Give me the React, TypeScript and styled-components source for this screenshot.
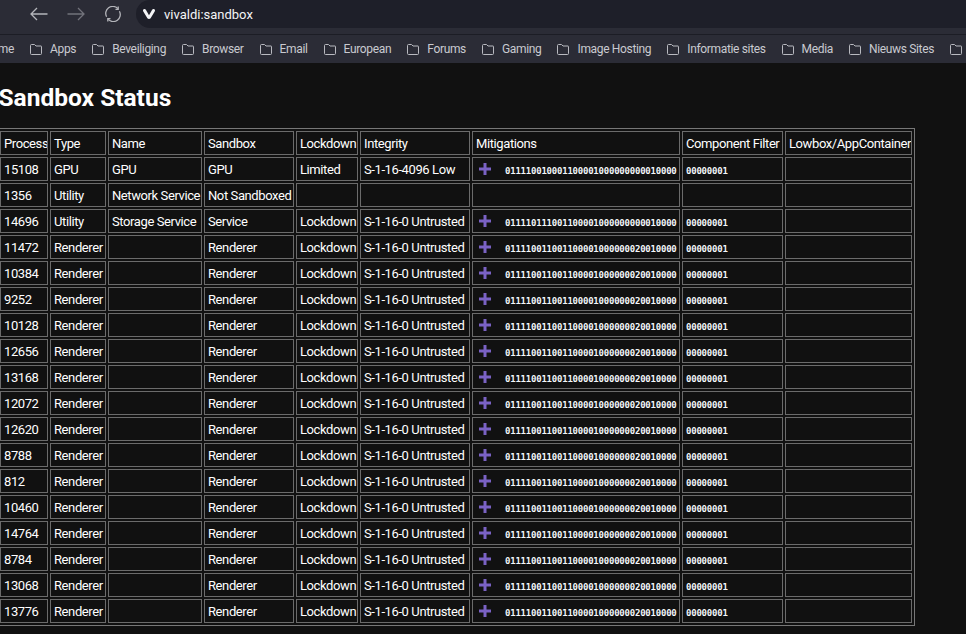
import { FunctionComponent } from 'react';
import styled, { createGlobalStyle } from 'styled-components';

const uiFont = `Roboto, "Open Sans", "Liberation Sans", sans-serif`;

const bookmarks = [
    'Apps', 'Beveiliging', 'Browser', 'Email', 'European', 'Forums', 'Gaming',
    'Image Hosting', 'Informatie sites', 'Media', 'Nieuws Sites', '',
];

const columns = [48, 56, 94, 90, 62, 110, 208, 101, 127];
const headers = ['Process', 'Type', 'Name', 'Sandbox', 'Lockdown', 'Integrity', 'Mitigations', 'Component Filter', 'Lowbox/AppContainer'];

interface IProcess {
    pid: string,
    type: string,
    name?: string,
    sandbox: string,
    lockdown?: string,
    integrity?: string,
    mitigations?: string,
    filter?: string,
}

const RENDERER_MASK = '011110011001100001000000020010000';

const renderer = (pid: string): IProcess => ({
    pid,
    type: 'Renderer',
    sandbox: 'Renderer',
    lockdown: 'Lockdown',
    integrity: 'S-1-16-0 Untrusted',
    mitigations: RENDERER_MASK,
    filter: '00000001',
});

const processes: IProcess[] = [
    { pid: '15108', type: 'GPU', name: 'GPU', sandbox: 'GPU', lockdown: 'Limited', integrity: 'S-1-16-4096 Low', mitigations: '011110010001100001000000000010000', filter: '00000001' },
    { pid: '1356', type: 'Utility', name: 'Network Service', sandbox: 'Not Sandboxed' },
    { pid: '14696', type: 'Utility', name: 'Storage Service', sandbox: 'Service', lockdown: 'Lockdown', integrity: 'S-1-16-0 Untrusted', mitigations: '011110111001100001000000000010000', filter: '00000001' },
    ...['11472', '10384', '9252', '10128', '12656', '13168', '12072', '12620', '8788', '812', '10460', '14764', '8784', '13068', '13776'].map(renderer),
];

const FolderIcon: FunctionComponent = () => (
    <FolderSvg viewBox="0 0 12 11" width="12" height="11">
        <path d="M.5 1.5a1 1 0 0 1 1-1h3l1.500 1.500h5a.5.5 0 0 1 .5.5v7a1 1 0 0 1-1 1h-9a1 1 0 0 1-1-1z" fill="none" stroke="currentColor" />
    </FolderSvg>
);

const PlusIcon: FunctionComponent = () => (
    <PlusSvg viewBox="0 0 12 12" width="12" height="12">
        <path d="M4.500 0h3v4.500H12v3H7.500V12h-3V7.500H0v-3h4.500z" fill="#7a62c4" />
    </PlusSvg>
);

export default function App() {
    return (
        <>
            <GlobalStyle />
            <Toolbar>
                <NavButton $dim={false}>
                    <svg viewBox="0 0 18 14" width="18" height="14" fill="none" stroke="currentColor" strokeWidth="1.300">
                        <path d="M17.500 7H1M7 1 1 7l6 6" />
                    </svg>
                </NavButton>
                <NavButton $dim>
                    <svg viewBox="0 0 18 14" width="18" height="14" fill="none" stroke="currentColor" strokeWidth="1.300">
                        <path d="M.5 7H17M11 1l6 6-6 6" />
                    </svg>
                </NavButton>
                <NavButton $dim={false}>
                    <svg viewBox="0 0 16 16" width="16" height="16" fill="none" stroke="currentColor" strokeWidth="1.300">
                        <path d="M12.800 2.600A7 7 0 0 0 1.600 10.800" />
                        <path d="M3.200 13.400A7 7 0 0 0 14.400 5.200" />
                        <path d="M13.200 .6v2.700h-2.700M2.800 15.400v-2.700h2.700" />
                    </svg>
                </NavButton>
                <AddressField>
                    <svg viewBox="0 0 12 10" width="12" height="10">
                        <path d="M0 1.500C0 .5.700 0 1.500 0c.7 0 1.100.3 1.500 1l3 5.200L9 1c.4-.7.800-1 1.500-1C11.300 0 12 .5 12 1.500c0 .4-.1.700-.3 1L7.600 9.200c-.4.600-.9.800-1.600.8s-1.200-.2-1.600-.8L.3 2.500c-.2-.3-.3-.6-.3-1z" fill="#f4f4f6" />
                    </svg>
                    <AddressText>vivaldi:sandbox</AddressText>
                </AddressField>
            </Toolbar>
            <BookmarkBar>
                <BookmarkCut>me</BookmarkCut>
                {bookmarks.map((label, i) => (
                    <Bookmark key={i}>
                        <FolderIcon />
                        {label && <span>{label}</span>}
                    </Bookmark>
                ))}
            </BookmarkBar>
            <Page>
                <Title>Sandbox Status</Title>
                <StatusTable>
                    <colgroup>
                        {columns.map((width, i) => <col key={i} style={{ width }} />)}
                    </colgroup>
                    <thead>
                        <tr>
                            {headers.map((header) => <HeadCell key={header}>{header}</HeadCell>)}
                        </tr>
                    </thead>
                    <tbody>
                        {processes.map((p) => (
                            <tr key={p.pid}>
                                <Cell>{p.pid}</Cell>
                                <Cell>{p.type}</Cell>
                                <Cell>{p.name}</Cell>
                                <Cell>{p.sandbox}</Cell>
                                <Cell>{p.lockdown}</Cell>
                                <Cell>{p.integrity}</Cell>
                                <Cell>
                                    {p.mitigations && (
                                        <MitigationWrap>
                                            <PlusIcon />
                                            <Mono>{p.mitigations}</Mono>
                                        </MitigationWrap>
                                    )}
                                </Cell>
                                <Cell>{p.filter && <Mono>{p.filter}</Mono>}</Cell>
                                <Cell />
                            </tr>
                        ))}
                    </tbody>
                </StatusTable>
            </Page>
        </>
    );
}

const GlobalStyle = createGlobalStyle`
    html, body {
        margin: 0;
        height: 100%;
        overflow: hidden;
        background: #111111;
    }
    body {
        font-family: ${uiFont};
        color: #ffffff;
    }
`;

const Toolbar = styled.div`
    height: 35px;
    box-sizing: border-box;
    background: #2b2c36;
    border-bottom: 1px solid #1c1d25;
    display: flex;
    align-items: flex-start;
    padding-left: 30px;
`;

const NavButton = styled.div<{ $dim: boolean }>`
    width: 18px;
    height: 28px;
    margin-right: 19px;
    display: flex;
    align-items: center;
    justify-content: center;
    color: ${(p) => (p.$dim ? '#72737b' : '#b4b5ba')};
`;

const AddressField = styled.div`
    flex: 1;
    height: 28px;
    margin-left: -5px;
    padding-left: 7px;
    display: flex;
    align-items: center;
    gap: 9px;
    background: #1e1f29;
    border-radius: 14px 0 0 14px;
`;

const AddressText = styled.span`
    font-size: 13px;
    color: #f4f4f6;
`;

const BookmarkBar = styled.div`
    height: 28px;
    box-sizing: border-box;
    background: #2b2c36;
    display: flex;
    align-items: center;
    gap: 16px;
    overflow: hidden;
    white-space: nowrap;
    font-size: 12px;
    letter-spacing: -0.34px;
    color: #c9cad0;
`;

const BookmarkCut = styled.span`
    width: 14px;
    flex: none;
    display: flex;
    justify-content: flex-end;
`;

const Bookmark = styled.div`
    display: flex;
    align-items: center;
    gap: 8px;
    flex: none;
`;

const FolderSvg = styled.svg`
    flex: none;
    color: #b9bac0;
`;

const Page = styled.main`
    margin-left: -3px;
    background: #111111;
`;

const Title = styled.h1`
    margin: 0;
    padding: 19px 0 14px 1.500px;
    height: 32px;
    line-height: 32px;
    font-size: 24.500px;
    font-weight: 700;
    color: #ffffff;
`;

const StatusTable = styled.table`
    table-layout: fixed;
    width: 918px;
    border-collapse: separate;
    border-spacing: 2px;
    border: 1px solid #777777;
    font-size: 13px;
    letter-spacing: -0.4px;
    color: #ffffff;
`;

const Cell = styled.td`
    height: 24px;
    box-sizing: border-box;
    padding: 0 3px;
    border: 1px solid #6b6b6b;
    white-space: nowrap;
    overflow: hidden;
`;

const HeadCell = styled(Cell).attrs({ as: 'th' })`
    font-weight: 400;
    text-align: left;
`;

const MitigationWrap = styled.div`
    display: flex;
    align-items: center;
    padding-left: 3px;
    gap: 14px;
`;

const PlusSvg = styled.svg`
    flex: none;
`;

const Mono = styled.span`
    display: block;
    margin: 3px 0 0;
    line-height: 12px;
    font-family: "DejaVu Sans Mono", "Liberation Mono", monospace;
    font-size: 9px;
    letter-spacing: -0.22px;
    font-weight: 700;
    color: #f4f7fa;
`;
